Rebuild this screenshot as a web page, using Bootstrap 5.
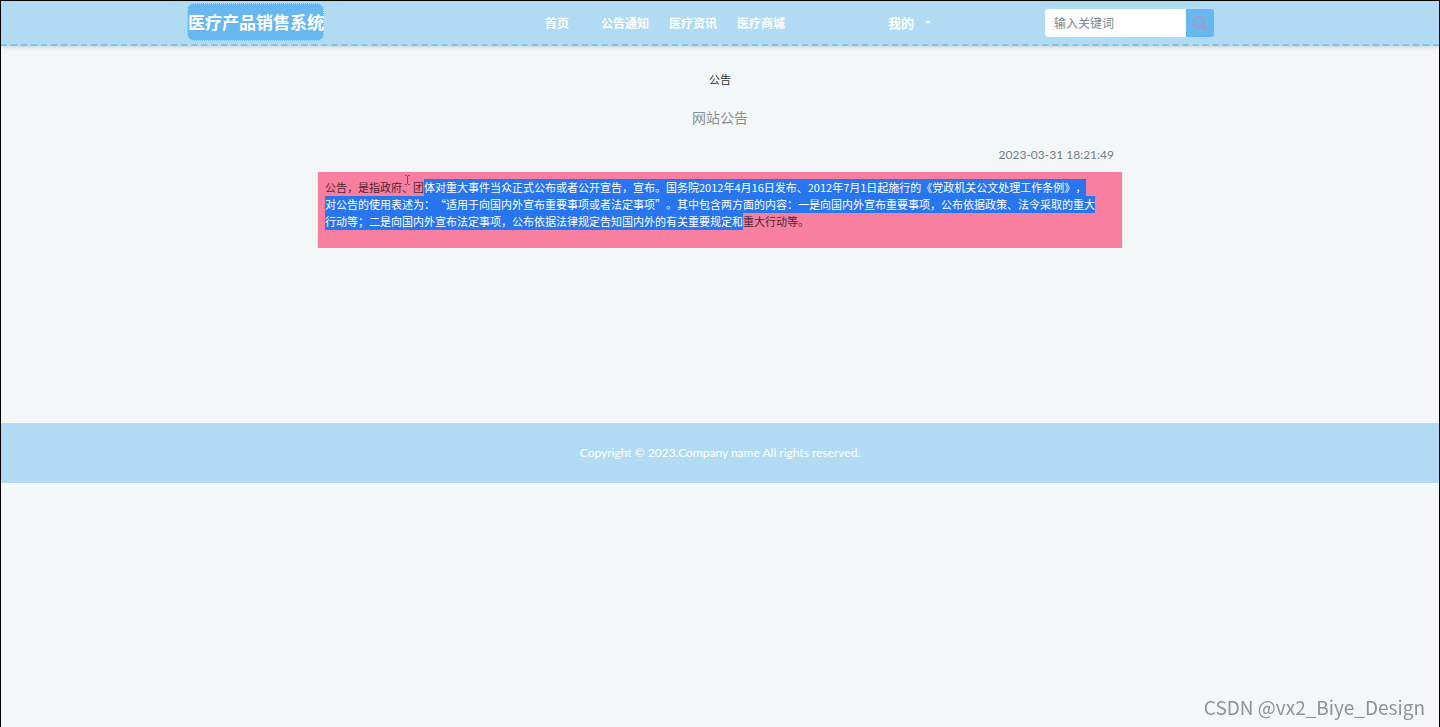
<!DOCTYPE html>
<html lang="zh-CN">
<head>
<meta charset="utf-8">
<meta name="viewport" content="width=device-width, initial-scale=1">
<title>医疗产品销售系统</title>
<link href="https://cdn.jsdelivr.net/npm/bootstrap@5.3.0/dist/css/bootstrap.min.css" rel="stylesheet">
<style>
  body { font-family: "Liberation Sans", "Noto Sans CJK SC", sans-serif; font-size: 11px; line-height: 17px; background: #f3f7f8; border: solid #000; border-width: 1px 1px 0; color: #2b2f3a; }
  .cjk { font-family: "Noto Sans CJK SC", sans-serif; }
  .site-head { background: #b1dbf3; border-bottom: 2px dashed #7fc4ee; box-shadow: 0 1px 4px rgba(0,0,0,.18); height: 45px; }
  .head-inner { max-width: 1066px; }
  .brand { font-size: 17px; line-height: 36px; background: #67b8f0; border: 1px dotted #c9e7fa; border-radius: 7px; color: #fff; width: 137px; margin-bottom: 2px; }
  .main-nav { font-size: 12px; margin-left: 221px; gap: 20px; }
  .main-nav .home-link { margin-right: 12px; }
  .mine { font-size: 13px; margin-left: 103px; gap: 11px; line-height: 20px; }
  .mine::after { content: ""; border: solid transparent; border-width: 3px 3px 0; border-top-color: #fff; }
  .search { width: 169px; margin-left: 114px; height: 28px; }
  .search .form-control { font-size: 12px; line-height: 18px; padding: 4px 8px; border: 1px solid #fff; border-radius: 3px 0 0 3px; min-height: 28px; }
  .search .form-control::placeholder { color: #7b8490; }
  .search .btn { width: 28px; background: #67b8f0; border-radius: 0 3px 3px 0; }
  .notice { max-width: 804px; padding-top: 25px; min-height: 377px; }
  .notice h1 { font-size: 11px; line-height: 17px; margin-bottom: 19px; }
  .notice h2 { font-size: 14px; line-height: 20px; margin-bottom: 19px; color: #8c9194; }
  .stamp { font-family: Lato, sans-serif; font-size: 12px; line-height: 18px; padding-right: 8px; margin-bottom: 8px; color: #777c80; }
  .notice-body { background: #f87fa0; padding: 7px 4px 18px 7px; color: #4a2634; text-spacing-trim: space-all; }
  .picked { background: #2875f0; color: #fff; padding-bottom: 1px; }
  .caret-mark { left: 86px; top: 2px; }
  .site-foot { background: #b1dbf3; color: #fff; font-family: Lato, sans-serif; font-size: 12px; line-height: 18px; padding: 21px 0; }
  .watermark { right: 15px; bottom: 8px; font-size: 19px; line-height: 24px; color: #909396; }
</style>
</head>
<body class="min-vh-100">
<header class="site-head">
  <div class="head-inner container-fluid px-0 d-flex align-items-center h-100">
    <a href="#" class="brand cjk fw-bold text-center text-decoration-none text-nowrap flex-shrink-0">医疗产品销售系统</a>
    <nav class="main-nav cjk d-flex fw-bold text-nowrap">
      <a href="#" class="home-link text-white text-decoration-none">首页</a>
      <a href="#" class="text-white text-decoration-none">公告通知</a>
      <a href="#" class="text-white text-decoration-none">医疗资讯</a>
      <a href="#" class="text-white text-decoration-none">医疗商城</a>
    </nav>
    <button type="button" class="mine cjk btn p-0 border-0 text-white fw-bold d-flex align-items-center text-nowrap">我的</button>
    <form class="search input-group flex-nowrap flex-shrink-0" role="search">
      <input type="text" class="form-control cjk" placeholder="输入关键词" aria-label="输入关键词">
      <button type="button" class="btn p-0 border-0 d-flex align-items-center justify-content-center" aria-label="搜索">
        <svg width="14" height="14" viewBox="0 0 14 14" fill="none" stroke="#e27ba4"><circle cx="5.8" cy="5.8" r="5.2"/><path d="M9.5 9.5l3.8 3.8" stroke-width="1.6"/></svg>
      </button>
    </form>
  </div>
</header>

<main class="notice container-fluid px-0">
  <h1 class="cjk text-center fw-normal">公告</h1>
  <h2 class="cjk text-center fw-normal">网站公告</h2>
  <div class="stamp text-end">2023-03-31 18:21:49</div>
  <div class="notice-body cjk position-relative">
    <p class="mb-0">公告，是指政府、团<span class="picked">体对重大事件当众正式公布或者公开宣告，宣布。国务院2012年4月16日发布、2012年7月1日起施行的《党政机关公文处理工作条例》，<br>对公告的使用表述为：“适用于向国内外宣布重要事项或者法定事项”。其中包含两方面的内容：一是向国内外宣布重要事项，公布依据政策、法令采取的重大<br>行动等；二是向国内外宣布法定事项，公布依据法律规定告知国内外的有关重要规定和</span>重大行动等。</p>
    <svg class="caret-mark position-absolute" width="7" height="12" viewBox="0 0 7 12" fill="none" stroke="#75505e" aria-hidden="true"><path d="M1 1.500h2M4 1.500h2M3.500 2v8M1 10.500h2M4 10.500h2"/></svg>
  </div>
</main>

<footer class="site-foot text-center">Copyright © 2023.Company name All rights reserved.</footer>
<div class="watermark cjk position-fixed">CSDN @vx2_Biye_Design</div>
<script src="https://cdn.jsdelivr.net/npm/bootstrap@5.3.0/dist/js/bootstrap.bundle.min.js"></script>
</body>
</html>
